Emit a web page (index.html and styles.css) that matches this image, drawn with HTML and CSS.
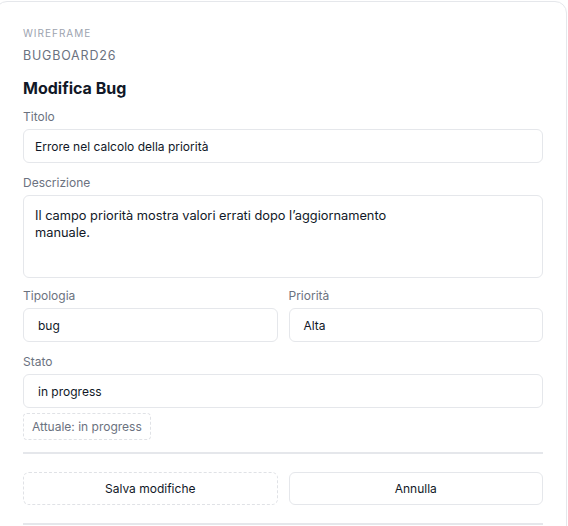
FILE: index.html
```html
<!DOCTYPE html>
<html lang="it">
<head>
<meta charset="utf-8">
<link rel="stylesheet" href="styles.css">
</head>
<body>
<div class="card">
  <div class="eyebrow">WIREFRAME</div>
  <div class="brand">BUGBOARD26</div>
  <h2 class="title">Modifica Bug</h2>

  <div class="field">
    <div class="label">Titolo</div>
    <div class="input">Errore nel calcolo della priorità</div>
  </div>

  <div class="field">
    <div class="label">Descrizione</div>
    <div class="textarea">Il campo priorità mostra valori errati dopo l’aggiornamento<br>manuale.</div>
  </div>

  <div class="row">
    <div class="field">
      <div class="label">Tipologia</div>
      <div class="input select">bug</div>
    </div>
    <div class="field">
      <div class="label">Priorità</div>
      <div class="input select">Alta</div>
    </div>
  </div>

  <div class="field">
    <div class="label">Stato</div>
    <div class="input select">in progress</div>
    <div class="badge">Attuale: in progress</div>
  </div>

  <div class="divider"></div>

  <div class="actions">
    <div class="btn btn-dashed">Salva modifiche</div>
    <div class="btn">Annulla</div>
  </div>

  <div class="divider bottom"></div>
</div>
</body>
</html>
```

FILE: styles.css
```css
* { box-sizing: border-box; }

html, body {
  margin: 0;
  padding: 0;
  background: #ffffff;
  overflow: hidden;
}

body {
  font-family: Inter, "Noto Sans", sans-serif;
  color: #111827;
  height: 526px;
}

.card {
  margin: 1px 0 0 -5px;
  width: 572px;
  border: 1px solid #e5e7eb;
  border-radius: 12px;
  padding: 23px 23px 40px 27px;
}

.eyebrow {
  font-size: 10px;
  line-height: 16px;
  letter-spacing: 1px;
  color: #9ca3af;
}

.brand {
  margin-top: 6px;
  font-size: 12.5px;
  line-height: 18px;
  letter-spacing: 0.8px;
  color: #6b7280;
}

.title {
  margin: 12px 0 0;
  font-size: 16px;
  line-height: 22px;
  font-weight: 700;
  color: #111827;
}

.field {
  display: flex;
  flex-direction: column;
  margin-top: 10px;
}

.field + .field,
.row + .field {
  margin-top: 12px;
}

.field + .row {
  margin-top: 10px;
}

.row .field {
  margin-top: 0;
}

.label {
  font-size: 12px;
  line-height: 16px;
  color: #6b7280;
  margin-bottom: 4px;
}

.input {
  height: 34px;
  border: 1px solid #e5e7eb;
  border-radius: 6px;
  padding: 0 11px;
  display: flex;
  align-items: center;
  font-size: 12px;
  color: #111827;
}

.input.select {
  padding-left: 14px;
}

.textarea {
  height: 83px;
  border: 1px solid #e5e7eb;
  border-radius: 6px;
  padding: 11px 11px 10px;
  font-size: 12.8px;
  line-height: 17px;
  color: #111827;
}

.row {
  display: grid;
  grid-template-columns: 1fr 1fr;
  column-gap: 11px;
}

.badge {
  align-self: flex-start;
  margin-top: 5px;
  height: 27px;
  display: flex;
  align-items: center;
  padding: 0 8px;
  border: 1px dashed #e0e2e6;
  border-radius: 4px;
  font-size: 12px;
  color: #6b7280;
}

.divider {
  height: 2px;
  background: #e5e7eb;
  margin-top: 12px;
}

.actions {
  display: grid;
  grid-template-columns: 1fr 1fr;
  column-gap: 11px;
  margin-top: 18px;
}

.btn {
  height: 33px;
  border: 1px solid #e5e7eb;
  border-radius: 6px;
  display: flex;
  align-items: center;
  justify-content: center;
  font-size: 12px;
  color: #111827;
}

.btn-dashed {
  border: 1px dashed #e0e2e6;
}

.divider.bottom {
  margin-top: 18px;
}
```
